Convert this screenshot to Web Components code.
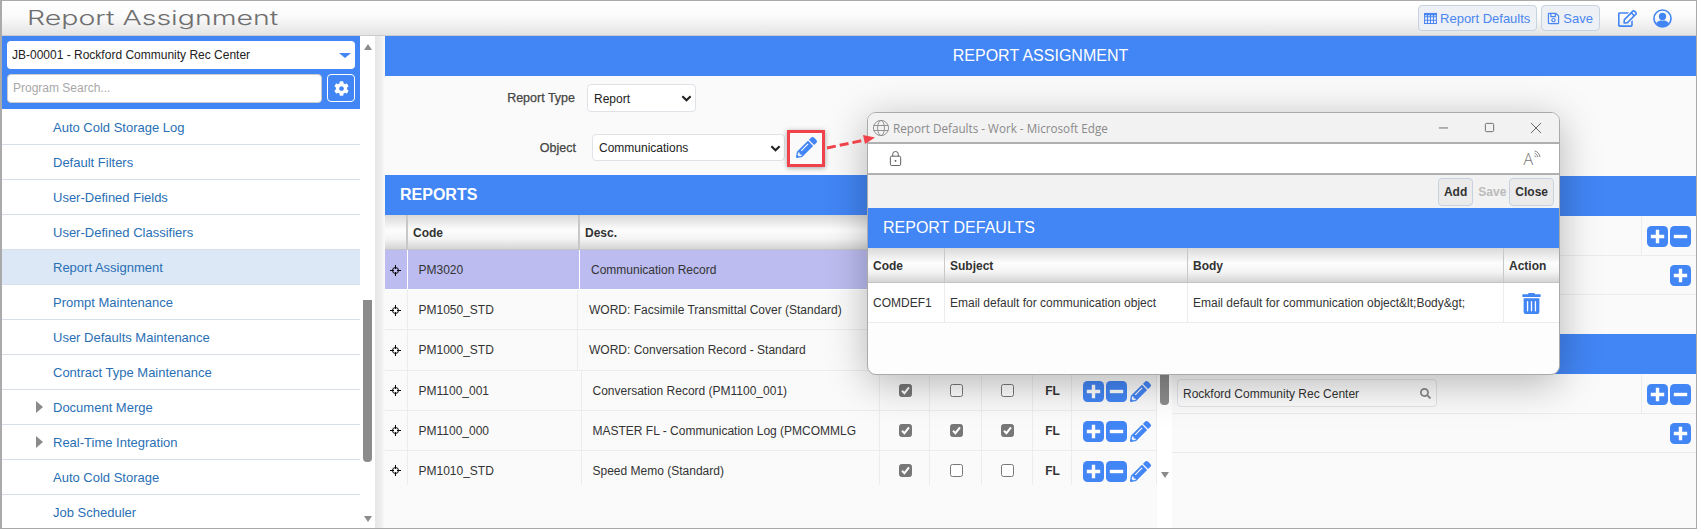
<!DOCTYPE html>
<html>
<head>
<meta charset="utf-8">
<title>Report Assignment</title>
<style>
  html, body { margin: 0; padding: 0; background: #fff; }
  body { width: 1697px; height: 529px; overflow: hidden; font-family: "Liberation Sans", Arial, sans-serif; }
</style>
</head>
<body>
<app-shell></app-shell>

<script>
(function() {
    const ICONS = {
        pencil: ['0 0 512 512', '<path fill="currentColor" d="M497.9 142.1l-46.1 46.1c-4.7 4.7-12.3 4.7-17 0l-111-111c-4.7-4.7-4.7-12.3 0-17l46.1-46.1c18.7-18.7 49.1-18.7 67.9 0l60.1 60.1c18.8 18.7 18.8 49.1 0 67.9zM284.2 99.8L21.6 362.4.4 483.9c-2.9 16.4 11.4 30.6 27.8 27.8l121.5-21.3 262.6-262.6c4.7-4.7 4.7-12.3 0-17l-111-111c-4.8-4.7-12.4-4.7-17.1 0zM124.1 339.9c-5.5-5.5-5.5-14.3 0-19.8l154-154c5.5-5.5 14.3-5.5 19.8 0s5.5 14.3 0 19.8l-154 154c-5.5 5.5-14.3 5.5-19.8 0zM88 424h48v36.3l-64.5 11.3-31.1-31.1L51.7 376H88v48z"/>'],
        trash: ['0 0 448 512', '<path fill="currentColor" d="M32 464a48 48 0 0 0 48 48h288a48 48 0 0 0 48-48V128H32zm272-256a16 16 0 0 1 32 0v224a16 16 0 0 1-32 0zm-96 0a16 16 0 0 1 32 0v224a16 16 0 0 1-32 0zm-96 0a16 16 0 0 1 32 0v224a16 16 0 0 1-32 0zM432 32H312l-9.4-18.7A24 24 0 0 0 281.1 0H166.8a23.72 23.72 0 0 0-21.4 13.3L136 32H16A16 16 0 0 0 0 48v32a16 16 0 0 0 16 16h416a16 16 0 0 0 16-16V48a16 16 0 0 0-16-16z"/>'],
        cog: ['0 0 512 512', '<path fill="currentColor" d="M487.4 315.7l-42.6-24.6c4.3-23.2 4.3-47 0-70.2l42.6-24.6c4.9-2.8 7.1-8.6 5.5-14-11.1-35.6-30-67.8-54.7-94.6-3.8-4.1-10-5.1-14.8-2.3L380.8 110c-17.9-15.4-38.5-27.3-60.8-35.1V25.8c0-5.6-3.9-10.5-9.4-11.7-36.7-8.2-74.3-7.8-109.2 0-5.5 1.2-9.4 6.1-9.4 11.7V75c-22.2 7.9-42.8 19.8-60.8 35.1L88.7 85.5c-4.9-2.8-11-1.9-14.8 2.3-24.7 26.7-43.6 58.9-54.7 94.6-1.7 5.4.6 11.2 5.5 14L67.3 221c-4.3 23.2-4.3 47 0 70.2l-42.6 24.6c-4.9 2.8-7.1 8.6-5.5 14 11.1 35.6 30 67.8 54.7 94.6 3.8 4.1 10 5.1 14.8 2.3l42.6-24.6c17.9 15.4 38.5 27.3 60.8 35.1v49.2c0 5.6 3.9 10.5 9.4 11.7 36.7 8.2 74.3 7.8 109.2 0 5.5-1.2 9.4-6.1 9.4-11.7v-49.2c22.2-7.9 42.8-19.8 60.8-35.1l42.6 24.6c4.9 2.8 11 1.9 14.8-2.3 24.7-26.7 43.6-58.9 54.7-94.6 1.5-5.5-.7-11.3-5.6-14.1zM256 336c-44.1 0-80-35.9-80-80s35.9-80 80-80 80 35.9 80 80-35.9 80-80 80z"/>'],
        save: ['0 0 448 512', '<path fill="currentColor" d="M433.941 129.941l-83.882-83.882A48 48 0 0 0 316.118 32H48C21.49 32 0 53.49 0 80v352c0 26.51 21.49 48 48 48h352c26.51 0 48-21.49 48-48V163.882a48 48 0 0 0-14.059-33.941zM272 80v80H144V80h128zm122 352H54a6 6 0 0 1-6-6V86a6 6 0 0 1 6-6h42v104c0 13.255 10.745 24 24 24h176c13.255 0 24-10.745 24-24V83.882l78.243 78.243a6 6 0 0 1 1.757 4.243V426a6 6 0 0 1-6 6zM224 232c-48.523 0-88 39.477-88 88s39.477 88 88 88 88-39.477 88-88-39.477-88-88-88zm0 128c-22.056 0-40-17.944-40-40s17.944-40 40-40 40 17.944 40 40-17.944 40-40 40z"/>'],
        edit: ['0 0 576 512', '<path fill="currentColor" d="M402.3 344.9l32-32c5-5 13.7-1.5 13.7 5.7V464c0 26.5-21.5 48-48 48H48c-26.5 0-48-21.5-48-48V112c0-26.5 21.5-48 48-48h273.5c7.1 0 10.7 8.6 5.7 13.7l-32 32c-1.5 1.5-3.5 2.3-5.7 2.3H48v352h352V350.5c0-2.1.8-4.1 2.3-5.6zm156.6-201.8L296.3 405.7l-90.4 10c-26.2 2.9-48.5-19.2-45.6-45.6l10-90.4L432.9 17.1c22.9-22.9 59.9-22.9 82.7 0l43.2 43.2c22.9 22.9 22.9 60 .1 82.8zM460.1 174L402 115.9 216.2 301.8l-7.3 65.3 65.3-7.3L460.1 174zm64.8-79.7l-43.2-43.2c-4.1-4.1-10.8-4.1-14.8 0L436 82l58.1 58.1 30.9-30.9c4-4.2 4-10.8-.1-14.9z"/>'],
        search: ['0 0 512 512', '<path fill="currentColor" d="M505 442.7L405.3 343c-4.5-4.5-10.6-7-17-7H372c27.6-35.3 44-79.7 44-128C416 93.1 322.9 0 208 0S0 93.1 0 208s93.1 208 208 208c48.3 0 92.7-16.4 128-44v16.3c0 6.4 2.5 12.5 7 17l99.7 99.7c9.4 9.4 24.6 9.4 33.9 0l28.3-28.3c9.4-9.4 9.4-24.6.1-34zM208 336c-70.7 0-128-57.2-128-128 0-70.7 57.2-128 128-128 70.7 0 128 57.2 128 128 0 70.7-57.2 128-128 128z"/>'],
        grid: ['0 0 14 12', '<path fill="none" stroke="currentColor" stroke-width="1.1" d="M.6.6h12.8v10.8H.6zM.6 4.2h12.8M.6 7.8h12.8M3.8.6v10.8M7 .6v10.8M10.2.6v10.8"/><path fill="currentColor" d="M0 0h14v2.6H0z"/>'],
        user: ['0 0 20 20', '<circle cx="10" cy="10" r="9" fill="none" stroke="currentColor" stroke-width="1.7"/><circle cx="10" cy="7.8" r="3.8" fill="currentColor"/><path fill="currentColor" d="M3.4 15.6c1-2.6 3-3.6 4.6-3.6h4c1.6 0 3.6 1 4.6 3.6C15.2 17.6 12.8 18.6 10 18.6s-5.2-1-6.6-3z"/>'],
        plus: ['0 0 21 21', '<rect width="21" height="21" rx="4.5" fill="currentColor"/><path fill="#fff" d="M8.8 3.8h3.4v5h5v3.4h-5v5H8.8v-5h-5V8.8h5z"/>'],
        minus: ['0 0 21 21', '<rect width="21" height="21" rx="4.5" fill="currentColor"/><path fill="#fff" d="M3.8 8.8h13.4v3.4H3.8z"/>'],
        target: ['0 0 11 11', '<circle cx="5.5" cy="5.5" r="3" fill="none" stroke="currentColor" stroke-width="1"/><path stroke="currentColor" stroke-width="1" d="M5.5 0v3.9M5.5 7.1V11M0 5.5h3.900M7.100 5.500H11"/>'],
        chevron: ['0 0 12 8', '<path fill="none" stroke="currentColor" stroke-width="2.3" d="M1.5 1.5L6 6l4.5-4.5"/>'],
        globe: ['0 0 18 18', '<g fill="none" stroke="currentColor" stroke-width=".9"><circle cx="9" cy="9" r="7.6"/><ellipse cx="9" cy="9" rx="3.4" ry="7.6"/><path d="M1.8 6.5h14.4M1.8 11.5h14.4"/></g>'],
        lock: ['0 0 12 16', '<g fill="none" stroke="currentColor" stroke-width="1"><rect x=".5" y="5.5" width="11" height="10" rx="1.5"/><path d="M3 5.5V3.5a3 3 0 0 1 6 0v2"/></g><circle cx="6" cy="10.5" r="1" fill="currentColor"/>'],
        waves: ['0 0 8 10', '<path fill="none" stroke="currentColor" stroke-width="1" d="M.8 1c2.7.5 5.4 3 6 6.8M.8 3.6c1.6.3 3.2 1.8 3.5 4.2M.8 6.2c.8.2 1.4.8 1.6 1.7"/>'],
        minimize: ['0 0 12 12', '<path stroke="currentColor" d="M1 6.5h10"/>'],
        maximize: ['0 0 12 12', '<rect x="1.5" y="1.5" width="9" height="9" rx="1.2" fill="none" stroke="currentColor"/>'],
        close: ['0 0 12 12', '<path stroke="currentColor" d="M1 1l10 10M11 1L1 11"/>']
    };

    class UiIcon extends HTMLElement {
        connectedCallback() {
            const icon = ICONS[this.getAttribute('name')];
            const size = this.getAttribute('size') || 16;
            if (!this.shadowRoot) this.attachShadow({ mode: 'open' });
            this.shadowRoot.innerHTML = `
                <style>
                  :host { display: inline-flex; flex: none; align-items: center; justify-content: center; line-height: 0; }
                  svg { display: block; }
                </style>
                <svg viewBox="${icon[0]}" width="${size}" height="${size}">${icon[1]}</svg>`;
        }
    }

    class TopBar extends HTMLElement {
        constructor() {
            super();
            this.attachShadow({ mode: 'open' }).innerHTML = `
                <style>
                  :host {
                    display: flex; align-items: center; height: 35px; box-sizing: border-box;
                    background: linear-gradient(#fff 0%, #fbfbfb 45%, #e4e4e4 100%);
                    border-bottom: 1px solid #ccc;
                  }
                  .title {
                    margin-left: 25px; font: 300 20px Inter, "Liberation Sans", sans-serif; color: #6f6f6f;
                    transform: scaleX(1.425); transform-origin: left center; white-space: nowrap;
                  }
                  .spacer { flex: 1; }
                  .btn {
                    display: flex; align-items: center; gap: 3px; height: 26px; box-sizing: border-box;
                    padding: 0 6px 0 5px; border: 1px solid #c6d2df; border-radius: 4px;
                    background: #edf0f4; color: #4a86f2; font-size: 13px; margin-right: 4px;
                  }
                  .tool { color: #4285f4; margin-left: 14px; }
                  .tool.last { margin-left: 16px; margin-right: 24px; }
                </style>
                <span class="title">Report Assignment</span>
                <span class="spacer"></span>
                <span class="btn"><ui-icon name="grid" size="13"></ui-icon>Report Defaults</span>
                <span class="btn"><ui-icon name="save" size="13"></ui-icon>Save</span>
                <ui-icon class="tool" name="edit" size="19"></ui-icon>
                <ui-icon class="tool last" name="user" size="19"></ui-icon>`;
        }
    }

    class NavItem extends HTMLElement {
        constructor() {
            super();
            this.attachShadow({ mode: 'open' }).innerHTML = `
                <style>
                  :host {
                    display: flex; align-items: center; height: 35px; box-sizing: border-box;
                    border-bottom: 1px solid #d8dfe8; color: #2a6fb5; font-size: 13px;
                    padding-left: 51px; white-space: nowrap;
                  }
                  :host([selected]) { background: #dce8f5; }
                  .arrow {
                    display: none; width: 0; height: 0; margin-left: -17px; margin-right: 10px;
                    border-left: 7px solid #8a8a8a; border-top: 6px solid transparent; border-bottom: 6px solid transparent;
                  }
                  :host([branch]) .arrow { display: block; }
                </style>
                <span class="arrow"></span><slot></slot>`;
        }
    }

    class SideNav extends HTMLElement {
        constructor() {
            super();
            this.attachShadow({ mode: 'open' }).innerHTML = `
                <style>
                  :host { display: flex; flex-direction: column; width: 358px; flex: none; overflow: hidden; background: #fff; }
                  .head {
                    display: flex; flex-direction: column; gap: 5px; height: 73px; flex: none; box-sizing: border-box;
                    background: #4285f4; padding: 5px 5px 0;
                  }
                  .job {
                    display: flex; align-items: center; justify-content: space-between; height: 28px;
                    background: #fff; border-radius: 4px; padding: 0 3px 0 5px; font-size: 12px; color: #222;
                    white-space: nowrap;
                  }
                  .drop { width: 0; height: 0; margin-right: 1px; border-top: 5px solid #4285f4; border-left: 6px solid transparent; border-right: 6px solid transparent; }
                  .row { display: flex; gap: 5px; height: 29px; }
                  .search {
                    flex: 1; background: #fff; border-radius: 4px; border: 1px solid #ccc; box-sizing: border-box;
                    color: #a8a8a8; font-size: 12px; padding-left: 5px; line-height: 27px;
                  }
                  .gear {
                    width: 28px; height: 28px; box-sizing: border-box; border: 1px solid #fff; border-radius: 4px;
                    color: #fff; display: flex; align-items: center; justify-content: center;
                  }
                  .list { flex: 1; overflow: hidden; padding-top: 1px; }
                </style>
                <div class="head">
                  <div class="job"><span>JB-00001 - Rockford Community Rec Center</span><span class="drop"></span></div>
                  <div class="row">
                    <div class="search">Program Search...</div>
                    <div class="gear"><ui-icon name="cog" size="15"></ui-icon></div>
                  </div>
                </div>
                <div class="list">
                  <nav-item>Auto Cold Storage Log</nav-item>
                  <nav-item>Default Filters</nav-item>
                  <nav-item>User-Defined Fields</nav-item>
                  <nav-item>User-Defined Classifiers</nav-item>
                  <nav-item selected>Report Assignment</nav-item>
                  <nav-item>Prompt Maintenance</nav-item>
                  <nav-item>User Defaults Maintenance</nav-item>
                  <nav-item>Contract Type Maintenance</nav-item>
                  <nav-item branch>Document Merge</nav-item>
                  <nav-item branch>Real-Time Integration</nav-item>
                  <nav-item>Auto Cold Storage</nav-item>
                  <nav-item>Job Scheduler</nav-item>
                </div>`;
        }
    }

    class ScrollTrack extends HTMLElement {
        connectedCallback() {
            if (this.shadowRoot) return;
            const top = this.getAttribute('thumb-top');
            const height = this.getAttribute('thumb-height');
            this.attachShadow({ mode: 'open' }).innerHTML = `
                <style>
                  :host { display: flex; flex-direction: column; align-items: center; width: 15px; flex: none; background: #fff; }
                  .thumb { width: 9px; border-radius: 0 0 4px 4px; background: #8c8c8c; margin-top: ${top}px; height: ${height}px; }
                  .up, .down { width: 0; height: 0; border-left: 4.5px solid transparent; border-right: 4.5px solid transparent; }
                  .up { border-bottom: 6px solid #8c8c8c; margin-top: 8px; }
                  .down { border-top: 6px solid #8c8c8c; margin-top: auto; margin-bottom: var(--down-gap, 7px); }
                  :host([no-up]) .up { display: none; }
                </style>
                <span class="up"></span><span class="thumb"></span><span class="down"></span>`;
        }
    }

    class BlueBar extends HTMLElement {
        constructor() {
            super();
            this.attachShadow({ mode: 'open' }).innerHTML = `
                <style>
                  :host {
                    display: flex; align-items: center; height: 40px; flex: none; background: #4285f4; color: #fff;
                    font-size: 16px; padding-left: 15px; box-sizing: border-box;
                  }
                  :host([center]) { justify-content: center; padding-left: 0; }
                  :host([strong]) { font-weight: bold; }
                </style>
                <slot></slot>`;
        }
    }

    class FakeSelect extends HTMLElement {
        constructor() {
            super();
            this.attachShadow({ mode: 'open' }).innerHTML = `
                <style>
                  :host {
                    display: flex; align-items: center; justify-content: space-between; box-sizing: border-box;
                    background: #fff; border: 1px solid #dfe3e8; border-radius: 4px; padding: 1px 3px 0 6px;
                    font-size: 12px; color: #222;
                  }
                </style>
                <slot></slot><ui-icon name="chevron" size="11"></ui-icon>`;
        }
    }

    class ReportForm extends HTMLElement {
        constructor() {
            super();
            this.attachShadow({ mode: 'open' }).innerHTML = `
                <style>
                  :host { display: block; height: 99px; flex: none; box-sizing: border-box; padding-top: 8px; font-size: 12.5px; color: #444; }
                  .row { display: flex; align-items: center; }
                  .row + .row { margin-top: 22px; }
                  label { text-align: right; -webkit-text-stroke: .25px #444; }
                  .type label { width: 190px; margin-right: 12px; }
                  .type fake-select { width: 109px; height: 28px; }
                  .object label { width: 191px; margin-right: 16px; }
                  .object fake-select { width: 193px; height: 27px; }
                  .object ui-icon { color: #4285f4; margin-left: 11px; }
                </style>
                <div class="row type"><label>Report Type</label><fake-select>Report</fake-select></div>
                <div class="row object"><label>Object</label><fake-select>Communications</fake-select><ui-icon name="pencil" size="21"></ui-icon></div>`;
        }
    }

    class RowActions extends HTMLElement {
        constructor() {
            super();
            this.attachShadow({ mode: 'open' }).innerHTML = `
                <style>
                  :host { display: flex; align-items: center; gap: 2px; color: #4285f4; }
                  ui-icon:last-child { margin-left: 1px; }
                </style>
                <ui-icon name="plus" size="21"></ui-icon><ui-icon name="minus" size="21"></ui-icon><ui-icon name="pencil" size="21"></ui-icon>`;
        }
    }

    class CheckMark extends HTMLElement {
        connectedCallback() {
            if (this.shadowRoot) return;
            const checked = this.hasAttribute('checked');
            this.attachShadow({ mode: 'open' }).innerHTML = `
                <style>
                  :host { display: block; width: 13px; height: 13px; }
                  svg { display: block; }
                </style>
                <svg viewBox="0 0 13 13" width="13" height="13">
                  <rect x=".5" y=".5" width="12" height="12" rx="2" fill="${checked ? '#777' : '#fff'}" stroke="#777"/>
                  ${checked ? '<path fill="none" stroke="#fff" stroke-width="2" d="M3 6.8l2.4 2.4L10 3.4"/>' : ''}
                </svg>`;
        }
    }

    class ReportRow extends HTMLElement {
        connectedCallback() {
            if (this.shadowRoot) return;
            const codeWidth = this.getAttribute('code-width') || 173;
            const checks = this.getAttribute('checks');
            const boxes = checks ? [...checks].map((v) => `<div class="c"><check-mark ${v === '1' ? 'checked' : ''}></check-mark></div>`).join('') : '';
            const cells = checks ? `${boxes}<div class="c fl">FL</div><div class="act"><row-actions></row-actions></div>` : '';
            this.attachShadow({ mode: 'open' }).innerHTML = `
                <style>
                  :host {
                    display: grid; grid-template-columns: 23px ${codeWidth}px 1fr 50px 52px 51px 39px 85px;
                    height: 40.2px; box-sizing: border-box; border-bottom: 1px solid #ececec;
                    font-size: 12px; color: #333; white-space: nowrap;
                  }
                  :host([selected]) { background: #bcbcf0; border-bottom-color: #fff; }
                  :host([short]) { height: 34px; border-bottom: 0; overflow: hidden; grid-template-rows: 39px; }
                  div { display: flex; align-items: center; min-width: 0; border-right: 1px solid #ececec; }
                  :host([selected]) div { border-right-color: #fff; }
                  .h { justify-content: center; color: #000; padding: 1px 1px 0 0; }
                  .code { padding: 1px 0 0 10.5px; }
                  .desc { padding: 1px 0 0 11px; }
                  .c { justify-content: center; padding-left: 1px; }
                  .fl { font-weight: bold; color: #333; padding-top: 1px; }
                  .act { padding: 2px 0 0 11px; }
                </style>
                <div class="h"><ui-icon name="target" size="11"></ui-icon></div>
                <div class="code">${this.getAttribute('code')}</div>
                <div class="desc">${this.getAttribute('desc')}</div>
                ${cells}`;
        }
    }

    class ReportTable extends HTMLElement {
        constructor() {
            super();
            this.attachShadow({ mode: 'open' }).innerHTML = `
                <style>
                  :host { display: flex; flex-direction: column; width: 787px; flex: none; }
                  .body { display: flex; flex: 1; min-height: 0; }
                  .rows { flex: 1; min-width: 0; }
                  .head {
                    display: grid; grid-template-columns: 23px 172px 1fr; height: 35px; box-sizing: border-box;
                    background: linear-gradient(#d9d9d9, #fdfdfd 45%, #f4f4f4 70%, #d5d5d5);
                    border-bottom: 1px solid #c4c4c4; font-size: 12px; font-weight: bold; color: #333;
                  }
                  .head div { display: flex; align-items: center; border-right: 2px solid #c8c8c8; padding: 1px 0 0 5px; }
                  .head div:first-child { padding: 0; }
                  scroll-track { --down-gap: 50px; }
                </style>
                <blue-bar strong>REPORTS</blue-bar>
                <div class="body">
                  <div class="rows">
                    <div class="head"><div></div><div>Code</div><div>Desc.</div></div>
                    <report-row selected code-width="172" code="PM3020" desc="Communication Record"></report-row>
                    <report-row code-width="170" code="PM1050_STD" desc="WORD: Facsimile Transmittal Cover (Standard)"></report-row>
                    <report-row code-width="170" code="PM1000_STD" desc="WORD: Conversation Record - Standard"></report-row>
                    <report-row code-width="173.5" checks="100" code="PM1100_001" desc="Conversation Record (PM1100_001)"></report-row>
                    <report-row code-width="173.5" checks="111" code="PM1100_000" desc="MASTER FL - Communication Log (PMCOMMLG"></report-row>
                    <report-row short code-width="173.5" checks="100" code="PM1010_STD" desc="Speed Memo (Standard)"></report-row>
                  </div>
                  <scroll-track no-up thumb-top="40" thumb-height="150"></scroll-track>
                </div>`;
        }
    }

    class AssignRow extends HTMLElement {
        constructor() {
            super();
            this.attachShadow({ mode: 'open' }).innerHTML = `
                <style>
                  :host { display: flex; height: 39.5px; box-sizing: border-box; border-bottom: 1px solid #ececec; }
                  .main { flex: 1; display: flex; align-items: center; padding-left: 5px; border-right: 1px solid #ececec; }
                  .act { width: 54px; display: flex; align-items: center; justify-content: flex-end; gap: 2px; padding: 2px 5px 0 0; box-sizing: border-box; color: #4285f4; }
                  :host([single]) .main { border-right: 0; }
                  :host([single]) .minus { display: none; }
                </style>
                <div class="main"><slot></slot></div>
                <div class="act"><ui-icon name="plus" size="21"></ui-icon><ui-icon class="minus" name="minus" size="21"></ui-icon></div>`;
        }
    }

    class SearchField extends HTMLElement {
        constructor() {
            super();
            this.attachShadow({ mode: 'open' }).innerHTML = `
                <style>
                  :host {
                    display: flex; align-items: center; justify-content: space-between; width: 260px; height: 28px;
                    box-sizing: border-box; background: #fbfbfb; border: 1px solid #dfe3e8; border-radius: 4px;
                    padding: 1px 5px 0; font-size: 12px; color: #333;
                  }
                  ui-icon { color: #888; }
                </style>
                <slot></slot><ui-icon name="search" size="11"></ui-icon>`;
        }
    }

    class AssignPanel extends HTMLElement {
        constructor() {
            super();
            this.attachShadow({ mode: 'open' }).innerHTML = `
                <style>
                  :host { display: flex; flex-direction: column; flex: 1; min-width: 0; margin-top: 1px; }
                  .gap { height: 39px; }
                </style>
                <blue-bar></blue-bar>
                <assign-row></assign-row>
                <assign-row single></assign-row>
                <div class="gap"></div>
                <blue-bar></blue-bar>
                <assign-row><search-field>Rockford Community Rec Center</search-field></assign-row>
                <assign-row single></assign-row>`;
        }
    }

    class DefaultsDialog extends HTMLElement {
        constructor() {
            super();
            this.attachShadow({ mode: 'open' }).innerHTML = `
                <style>
                  :host {
                    position: absolute; left: 865px; top: 111px; width: 693px; height: 263px; box-sizing: border-box;
                    display: flex; flex-direction: column; overflow: hidden;
                    background: #fdfdfd; border: 1px solid #aaa; border-radius: 9px;
                    box-shadow: 0 8px 40px rgba(0,0,0,.28); z-index: 2;
                  }
                  .title {
                    display: flex; align-items: center; height: 31px; flex: none; box-sizing: border-box;
                    background: #f2f2f2; border-bottom: 2px solid #b0b0b0; padding-left: 4px; color: #8a8a8a;
                    font: 11.7px "Open Sans", sans-serif;
                  }
                  .title span { margin-left: 3px; flex: 1; }
                  .title ui-icon.win { margin-right: 35px; color: #666; }
                  .title ui-icon.win:last-child { margin-right: 17px; }
                  .url {
                    display: flex; align-items: center; justify-content: space-between; height: 31px; flex: none; box-sizing: border-box;
                    background: #fff; border-bottom: 2px solid #b0b0b0; padding: 0 17px 0 20px; color: #555;
                  }
                  .aloud { display: flex; align-items: flex-start; font: 300 16px "Open Sans", sans-serif; color: #777; line-height: 20px; }
                  .aloud ui-icon { margin-top: 1px; }
                  .tools {
                    display: flex; align-items: center; justify-content: flex-end; height: 33px; flex: none; box-sizing: border-box;
                    background: #f2f2f2; padding-right: 5px; font-size: 12px; font-weight: bold; color: #333;
                  }
                  .tools .b { height: 28px; box-sizing: border-box; line-height: 26px; padding: 0 5px; border: 1px solid #c6d2df; border-radius: 4px; background: #ebebeb; }
                  .tools .off { color: #bbb; margin: 0 3px 0 5px; }
                  .head {
                    display: grid; grid-template-columns: 77px 243px 316px 1fr; height: 35px; flex: none; box-sizing: border-box;
                    background: linear-gradient(#d9d9d9, #fdfdfd 45%, #f4f4f4 70%, #d5d5d5);
                    border-bottom: 1px solid #c4c4c4; font-size: 12px; font-weight: bold; color: #333;
                  }
                  .row {
                    display: grid; grid-template-columns: 77px 243px 316px 1fr; height: 40px; flex: none; box-sizing: border-box;
                    background: #fff; border-bottom: 1px solid #ececec; font-size: 12px; color: #333; white-space: nowrap;
                  }
                  .head div, .row div { display: flex; align-items: center; padding: 1px 0 0 5px; min-width: 0; }
                  .head div { border-right: 1px solid #c8c8c8; }
                  .row div { border-right: 1px solid #ececec; }
                  .head div:last-child, .row div:last-child { border-right: 0; }
                  .row div:last-child { justify-content: center; padding: 1px 0 0; color: #4285f4; }
                </style>
                <div class="title"><ui-icon name="globe" size="18"></ui-icon><span>Report Defaults - Work - Microsoft Edge</span>
                  <ui-icon class="win" name="minimize" size="11"></ui-icon><ui-icon class="win" name="maximize" size="11"></ui-icon><ui-icon class="win" name="close" size="12"></ui-icon></div>
                <div class="url"><ui-icon name="lock" size="15"></ui-icon><span class="aloud">A<ui-icon name="waves" size="9"></ui-icon></span></div>
                <div class="tools"><span class="b">Add</span><span class="off">Save</span><span class="b">Close</span></div>
                <blue-bar>REPORT DEFAULTS</blue-bar>
                <div class="head"><div>Code</div><div>Subject</div><div>Body</div><div>Action</div></div>
                <div class="row"><div>COMDEF1</div><div>Email default for communication object</div><div>Email default for communication object&amp;lt;Body&amp;gt;</div><div><ui-icon name="trash" size="21"></ui-icon></div></div>`;
        }
    }

    // red box round the pencil and the dashed arrow that points at the popup window
    class CalloutMark extends HTMLElement {
        constructor() {
            super();
            this.attachShadow({ mode: 'open' }).innerHTML = `
                <style>
                  :host { position: absolute; left: 785px; top: 129px; width: 92px; height: 38px; z-index: 3; }
                  .box { position: absolute; left: 0; top: 0; width: 38px; height: 37px; box-sizing: border-box; border: 3px solid #f0424a; box-shadow: 0 1px 5px rgba(0,0,0,.35); }
                  svg { position: absolute; left: 38px; top: 0; overflow: visible; }
                </style>
                <div class="box"></div>
                <svg width="54" height="38">
                  <path d="M2 18L41 9.8" fill="none" stroke="#f0424a" stroke-width="3" stroke-dasharray="9 4"/>
                  <path d="M50 7.5L38 5l2 9z" fill="#f0424a"/>
                </svg>`;
        }
    }

    class AppShell extends HTMLElement {
        constructor() {
            super();
            this.attachShadow({ mode: 'open' }).innerHTML = `
                <style>
                  :host {
                    display: flex; flex-direction: column; position: relative; width: 1697px; height: 529px; box-sizing: border-box;
                    border: 1px solid #aaa; border-left-width: 2px; overflow: hidden; background: #fafafa;
                  }
                  .body { flex: 1; display: flex; min-height: 0; }
                  .gutter { width: 10px; flex: none; background: linear-gradient(90deg, #e6e6e6, #eee 60%, #fafafa); }
                  main { flex: 1; min-width: 0; display: flex; flex-direction: column; }
                  .lower { flex: 1; display: flex; min-height: 0; }
                  scroll-track { --down-gap: 6px; }
                </style>
                <top-bar></top-bar>
                <div class="body">
                  <side-nav></side-nav>
                  <scroll-track thumb-top="250" thumb-height="162"></scroll-track>
                  <div class="gutter"></div>
                  <main>
                    <blue-bar center>REPORT ASSIGNMENT</blue-bar>
                    <report-form></report-form>
                    <div class="lower">
                      <report-table></report-table>
                      <assign-panel></assign-panel>
                    </div>
                  </main>
                </div>
                <defaults-dialog></defaults-dialog>
                <callout-mark></callout-mark>`;
        }
    }

    customElements.define('ui-icon', UiIcon);
    customElements.define('top-bar', TopBar);
    customElements.define('nav-item', NavItem);
    customElements.define('side-nav', SideNav);
    customElements.define('scroll-track', ScrollTrack);
    customElements.define('blue-bar', BlueBar);
    customElements.define('fake-select', FakeSelect);
    customElements.define('report-form', ReportForm);
    customElements.define('row-actions', RowActions);
    customElements.define('check-mark', CheckMark);
    customElements.define('report-row', ReportRow);
    customElements.define('report-table', ReportTable);
    customElements.define('assign-row', AssignRow);
    customElements.define('search-field', SearchField);
    customElements.define('assign-panel', AssignPanel);
    customElements.define('defaults-dialog', DefaultsDialog);
    customElements.define('callout-mark', CalloutMark);
    customElements.define('app-shell', AppShell);
})();
</script>
</body>
</html>
